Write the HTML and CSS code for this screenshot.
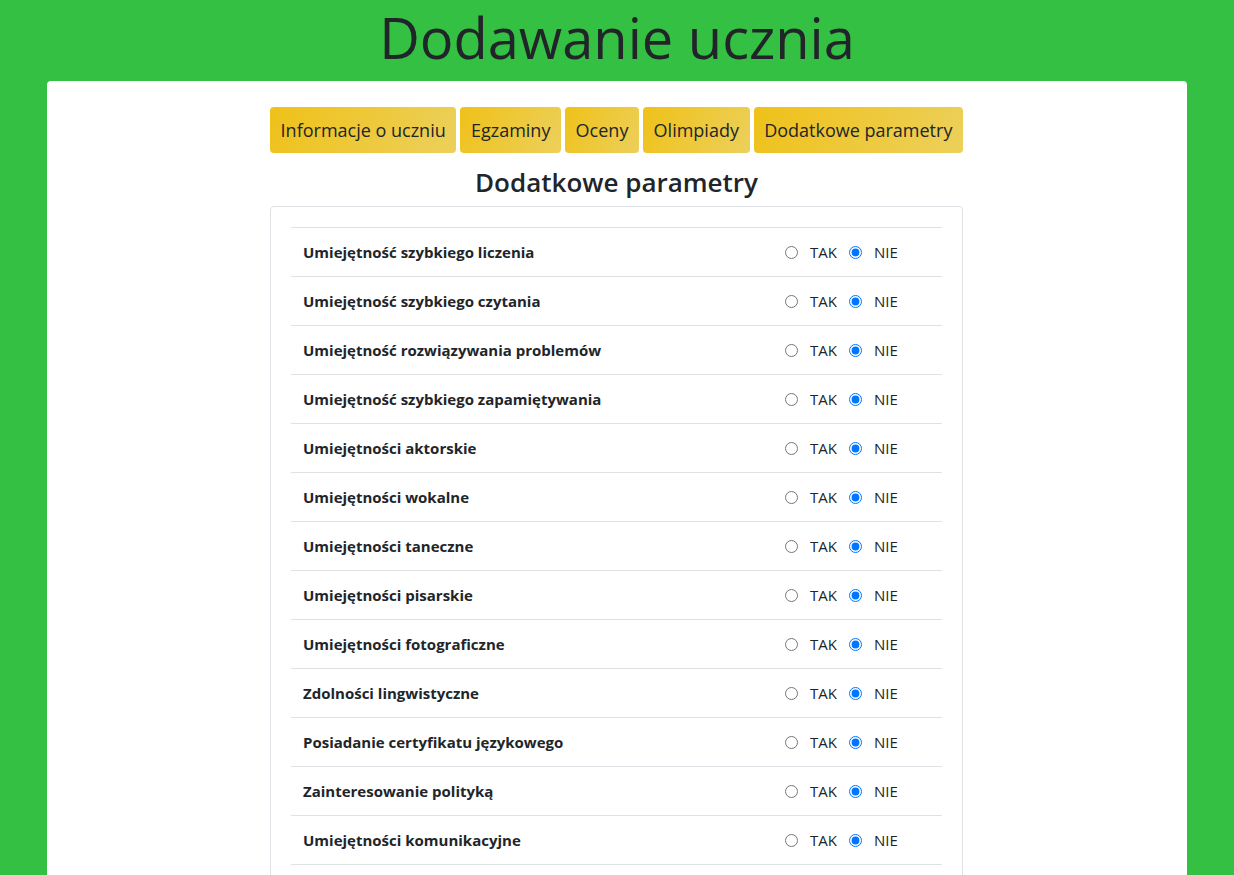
FILE: index.html
```html
<!DOCTYPE html>
<html lang="pl">
<head>
<meta charset="utf-8">
<title>Dodawanie ucznia</title>
<link rel="stylesheet" href="styles.css">
</head>
<body>
<header class="page-header">
  <h1 class="page-title">Dodawanie ucznia</h1>
</header>
<main class="container">
  <div class="content">
    <nav class="tabs">
      <button class="tab">Informacje o uczniu</button>
      <button class="tab">Egzaminy</button>
      <button class="tab">Oceny</button>
      <button class="tab">Olimpiady</button>
      <button class="tab">Dodatkowe parametry</button>
    </nav>
    <h3 class="section-title">Dodatkowe parametry</h3>
    <section class="card">
      <div class="table">
        <div class="row"><div class="label">Umiejętność szybkiego liczenia</div><div class="choice"><label><input type="radio" name="r1"> TAK</label><label><input type="radio" name="r1" checked> NIE</label></div></div>
        <div class="row"><div class="label">Umiejętność szybkiego czytania</div><div class="choice"><label><input type="radio" name="r2"> TAK</label><label><input type="radio" name="r2" checked> NIE</label></div></div>
        <div class="row"><div class="label">Umiejętność rozwiązywania problemów</div><div class="choice"><label><input type="radio" name="r3"> TAK</label><label><input type="radio" name="r3" checked> NIE</label></div></div>
        <div class="row"><div class="label">Umiejętność szybkiego zapamiętywania</div><div class="choice"><label><input type="radio" name="r4"> TAK</label><label><input type="radio" name="r4" checked> NIE</label></div></div>
        <div class="row"><div class="label">Umiejętności aktorskie</div><div class="choice"><label><input type="radio" name="r5"> TAK</label><label><input type="radio" name="r5" checked> NIE</label></div></div>
        <div class="row"><div class="label">Umiejętności wokalne</div><div class="choice"><label><input type="radio" name="r6"> TAK</label><label><input type="radio" name="r6" checked> NIE</label></div></div>
        <div class="row"><div class="label">Umiejętności taneczne</div><div class="choice"><label><input type="radio" name="r7"> TAK</label><label><input type="radio" name="r7" checked> NIE</label></div></div>
        <div class="row"><div class="label">Umiejętności pisarskie</div><div class="choice"><label><input type="radio" name="r8"> TAK</label><label><input type="radio" name="r8" checked> NIE</label></div></div>
        <div class="row"><div class="label">Umiejętności fotograficzne</div><div class="choice"><label><input type="radio" name="r9"> TAK</label><label><input type="radio" name="r9" checked> NIE</label></div></div>
        <div class="row"><div class="label">Zdolności lingwistyczne</div><div class="choice"><label><input type="radio" name="r10"> TAK</label><label><input type="radio" name="r10" checked> NIE</label></div></div>
        <div class="row"><div class="label">Posiadanie certyfikatu językowego</div><div class="choice"><label><input type="radio" name="r11"> TAK</label><label><input type="radio" name="r11" checked> NIE</label></div></div>
        <div class="row"><div class="label">Zainteresowanie polityką</div><div class="choice"><label><input type="radio" name="r12"> TAK</label><label><input type="radio" name="r12" checked> NIE</label></div></div>
        <div class="row"><div class="label">Umiejętności komunikacyjne</div><div class="choice"><label><input type="radio" name="r13"> TAK</label><label><input type="radio" name="r13" checked> NIE</label></div></div>
      </div>
    </section>
  </div>
</main>
</body>
</html>
```
FILE: styles.css
```css
html, body {
  margin: 0;
  padding: 0;
}
body {
  background: #33c043;
  font-family: "Open Sans", "Noto Sans", sans-serif;
  color: #212529;
  font-size: 16px;
  line-height: 1.5;
}
.page-header {
  display: flex;
  justify-content: center;
  padding: 4px 0 10px;
}
.page-title {
  margin: 0;
  font-size: 56px;
  font-weight: 400;
  line-height: 67px;
}
.container {
  width: 1140px;
  margin: 0 auto;
  background: #fff;
  border-radius: 4px 4px 0 0;
  padding-bottom: 40px;
}
.content {
  width: 693px;
  margin: 0 0 0 223px;
  padding-top: 26px;
  display: flex;
  flex-direction: column;
}
.tabs {
  display: flex;
  justify-content: center;
  gap: 4px;
}
.tab {
  font-family: inherit;
  font-size: 18px;
  line-height: 26px;
  color: #212529;
  border: 0;
  border-radius: 4px;
  padding: 10px 10.6px;
  background: linear-gradient(120deg, #efc118 0%, #ecd05c 100%);
  flex: 0 0 auto;
  cursor: pointer;
}
.section-title {
  margin: 14px 0 8px;
  text-align: center;
  font-size: 26px;
  font-weight: 600;
  line-height: 1.2;
}
.card {
  border: 1px solid #dee2e6;
  border-radius: 4px;
  padding: 20px;
}
.table {
  display: flex;
  flex-direction: column;
}
.row {
  display: grid;
  grid-template-columns: 1fr 169px;
  border-top: 1px solid #dee2e6;
}
.row:last-child {
  border-bottom: 1px solid #dee2e6;
}
.label {
  padding: 12px;
  font-weight: 700;
  font-size: 15px;
  line-height: 24px;
}
.choice {
  padding: 12px;
  display: flex;
  align-items: center;
  gap: 12px;
  font-size: 15px;
  line-height: 24px;
}
.choice label {
  display: flex;
  align-items: center;
  gap: 12px;
}
.choice input {
  margin: 0;
  width: 13px;
  height: 13px;
  accent-color: #0075ff;
}
```
